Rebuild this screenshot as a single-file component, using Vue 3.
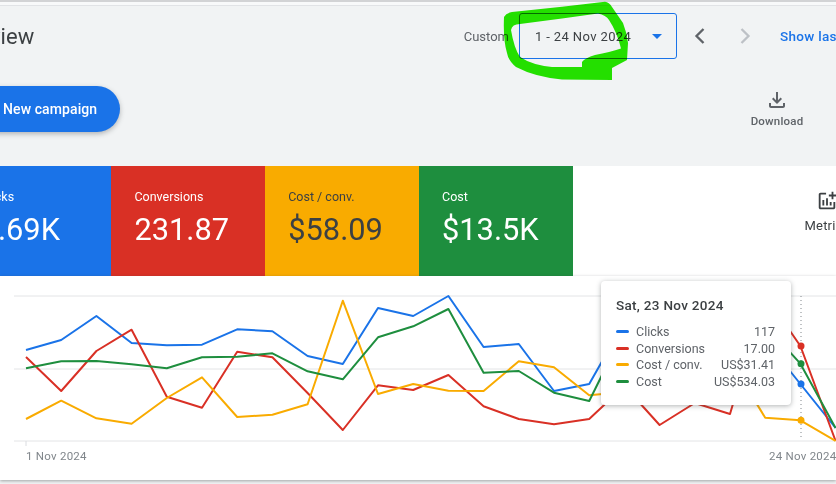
<script setup>
const gridLines = [296, 369, 441];

const stepX = 35.2;
const toPoints = (values) =>
  values.map((y, i) => `${(26 + i * stepX).toFixed(1)},${y}`).join(' ');

const series = [
  {
    name: 'Clicks',
    color: '#1a73e8',
    value: '117',
    marker: 384,
    points: toPoints([350, 340, 316, 343, 345.3, 344.7, 329.3, 331.3, 356, 364, 308, 316, 296, 347, 344, 391, 384, 322, 330, 340, 335, 340, 384, 428]),
  },
  {
    name: 'Conversions',
    color: '#d93025',
    value: '17.00',
    marker: 346,
    points: toPoints([357, 391, 351, 329.7, 396.7, 407.7, 351.7, 357.3, 393, 430, 385.3, 390, 375, 406.3, 419, 424.3, 419, 386, 425, 403, 414, 295, 346, 441]),
  },
  {
    name: 'Cost / conv.',
    color: '#f9ab00',
    value: 'US$31.41',
    marker: 420.3,
    points: toPoints([419, 400.7, 418.3, 423.7, 398, 377.3, 417, 414.7, 404.3, 300.7, 394, 384, 390.7, 391, 361.3, 367.3, 395.3, 392, 370, 360, 360, 417.7, 420.3, 441]),
  },
  {
    name: 'Cost',
    color: '#1e8e3e',
    value: 'US$534.03',
    marker: 363.7,
    points: toPoints([368.3, 361.3, 361, 364.3, 368.3, 357.3, 356.7, 353.3, 371.3, 379.3, 337.3, 326.3, 309, 372.7, 371, 392.7, 401, 330, 335, 345, 340, 325, 363.7, 428]),
  },
];

const tiles = [
  { label: 'Clicks', value: '2.69K', tone: 'blue' },
  { label: 'Conversions', value: '231.87', tone: 'red' },
  { label: 'Cost / conv.', value: '$58.09', tone: 'amber' },
  { label: 'Cost', value: '$13.5K', tone: 'green' },
];
</script>

<template>
  <div class="page">
    <div class="top-rule"></div>

    <header class="head-row">
      <h1 class="title">Overview</h1>
      <div class="date-controls">
        <span class="custom">Custom</span>
        <div class="date-box">
          <span>1 - 24 Nov 2024</span>
          <span class="caret"></span>
        </div>
        <button class="nav-btn">
          <svg width="28" height="28" viewBox="0 0 24 24" fill="none" stroke="#5f6368" stroke-width="2"><polyline points="15 6 9 12 15 18" /></svg>
        </button>
        <button class="nav-btn">
          <svg width="28" height="28" viewBox="0 0 24 24" fill="none" stroke="#bdc1c6" stroke-width="2"><polyline points="9 6 15 12 9 18" /></svg>
        </button>
        <a class="show-last">Show last 30 days</a>
      </div>
    </header>

    <div class="action-row">
      <button class="new-campaign">New campaign</button>
      <div class="download">
        <svg width="24" height="24" viewBox="0 0 24 24" fill="#5f6368"><path d="M18 15v3H6v-3H4v3c0 1.1.9 2 2 2h12c1.1 0 2-.9 2-2v-3h-2zm-1-4-1.41-1.41L13 12.17V4h-2v8.17L8.41 9.59 7 11l5 5 5-5z" /></svg>
        <span>Download</span>
      </div>
    </div>

    <section class="cards">
      <div v-for="tile in tiles" :key="tile.label" class="tile" :class="tile.tone">
        <div class="tile-label">{{ tile.label }}</div>
        <div class="tile-value">{{ tile.value }}</div>
      </div>
      <div class="metrics">
        <svg width="22" height="22" viewBox="0 0 24 24" fill="#3c4043"><path d="M22 5v2h-3v3h-2V7h-3V5h3V2h2v3h3zm-3 14H5V5h6V3H5c-1.1 0-2 .9-2 2v14c0 1.1.9 2 2 2h14c1.1 0 2-.9 2-2v-6h-2v6zm-4-6v4h2v-4h-2zm-4 4h2V9h-2v8zm-2 0v-6H7v6h2z" /></svg>
        <span>Metrics</span>
      </div>
    </section>

    <section class="chart">
      <svg class="plot" width="836" height="204" viewBox="0 276 836 204">
        <line v-for="y in gridLines" :key="y" x1="14" x2="836" :y1="y" :y2="y" stroke="#e3e4e6" stroke-width="1" />
        <line x1="26" x2="26" y1="441" y2="446" stroke="#dadce0" />
        <line x1="801" x2="801" y1="296" y2="440" stroke="#80868b" stroke-dasharray="1 3" />
        <polyline
          v-for="s in series"
          :key="s.name"
          :points="s.points"
          fill="none"
          :stroke="s.color"
          stroke-width="2"
          stroke-linejoin="round"
        />
        <circle v-for="s in series" :key="s.name + '-dot'" cx="801" :cy="s.marker" r="3.5" :fill="s.color" />
        <text x="26" y="460" class="axis-label">1 Nov 2024</text>
        <text x="769" y="460" class="axis-label">24 Nov 2024</text>
      </svg>

      <div class="tooltip">
        <div class="tooltip-title">Sat, 23 Nov 2024</div>
        <div class="tooltip-rows">
          <template v-for="s in series" :key="s.name">
            <span class="swatch" :style="{ background: s.color }"></span>
            <span class="row-name">{{ s.name }}</span>
            <span class="row-value">{{ s.value }}</span>
          </template>
        </div>
      </div>
    </section>

    <!-- hand drawn highlight round the date range -->
    <svg class="scribble" width="836" height="90" viewBox="0 0 836 90">
      <path
        fill="#26ea00"
        fill-rule="evenodd"
        d="M504 17 Q506 13 512 12 L562 6.7 L605 1.7 Q609 2 612 7 L623 23 Q627 33 628 43 L627 60 L612 68 L612 80 L562 79.5 Q535 77 516 67 Q508 60 507 53 Q503 40 504 17 Z
           M511 30 Q512 24 520 24 L562 18.5 L598 13.5 Q606 15 609 20 Q617 32 621 48.5 Q610 52 595 55 Q585 58 582 62 L582 67 L552 67 Q532 65 520 57 Q514 48 511 30 Z"
      />
    </svg>
  </div>
</template>

<style scoped>
.page {
  position: relative;
  width: 836px;
  height: 484px;
  overflow: hidden;
  background: #f1f3f4;
  font-family: Roboto, "Liberation Sans", sans-serif;
  color: #3c4043;
}

.top-rule {
  height: 3px;
  border-top: 2px solid #d2d3d5;
  border-bottom: 1px solid #e1e3e6;
  background: #f8f9fa;
}

.head-row {
  display: flex;
  align-items: center;
  height: 60px;
}

.title {
  margin: 0 0 0 -55px;
  font-size: 22px;
  font-weight: 400;
  color: #3c4043;
  flex-shrink: 0;
}

.date-controls {
  display: flex;
  align-items: center;
  margin-left: auto;
  flex-shrink: 0;
}

.custom {
  font-size: 13px;
  color: #5f6368;
  margin-right: 10px;
}

.date-box {
  display: flex;
  align-items: center;
  justify-content: space-between;
  box-sizing: border-box;
  width: 158px;
  height: 46px;
  padding: 0 14px 0 15px;
  border: 1px solid #1a73e8;
  border-radius: 3px;
  font-size: 13px;
  letter-spacing: 0.38px;
  color: #3c4043;
}

.caret {
  width: 0;
  height: 0;
  border-left: 5px solid transparent;
  border-right: 5px solid transparent;
  border-top: 5px solid #1a73e8;
}

.nav-btn {
  display: flex;
  align-items: center;
  justify-content: center;
  width: 45px;
  height: 40px;
  padding: 0;
  border: none;
  background: none;
}

.show-last {
  width: 56px;
  margin-left: 13px;
  font-size: 13.5px;
  font-weight: 500;
  color: #1a73e8;
  white-space: nowrap;
  letter-spacing: 0.3px;
}

.action-row {
  display: flex;
  justify-content: space-between;
  align-items: flex-start;
  height: 100px;
}

.new-campaign {
  box-sizing: border-box;
  width: 160px;
  height: 46px;
  margin: 20px 0 0 -40px;
  padding: 0 0 0 43px;
  border: none;
  border-radius: 23px;
  background: #1a73e8;
  color: #fff;
  font-family: inherit;
  font-size: 14px;
  font-weight: 500;
  letter-spacing: 0.1px;
  text-align: left;
  white-space: nowrap;
  box-shadow: 0 2px 5px rgba(60, 64, 67, 0.35);
}

.download {
  display: flex;
  flex-direction: column;
  align-items: center;
  width: 80px;
  margin: 22px 19px 0 0;
  font-size: 11.5px;
  font-weight: 500;
  color: #5f6368;
  letter-spacing: 0.2px;
}

.download span {
  margin-top: 2px;
  line-height: 14px;
}

.cards {
  display: flex;
  height: 110px;
  margin-left: -42.4px;
  background: #fff;
}

.tile {
  box-sizing: border-box;
  width: 153.8px;
  flex-shrink: 0;
  padding: 23px 0 0 23px;
  color: #fff;
}

.tile.blue { background: #1a73e8; }
.tile.red { background: #d93025; }
.tile.amber { background: #f9ab00; color: #3c4043; }
.tile.green { background: #1e8e3e; }

.tile-label {
  font-size: 12.5px;
  line-height: 16px;
}

.tile-value {
  margin-top: 7px;
  font-size: 30.8px;
  line-height: 36px;
}

.metrics {
  display: flex;
  flex-direction: column;
  align-items: center;
  width: 46px;
  margin: 24px -14px 0 auto;
  font-size: 13px;
  letter-spacing: 0.2px;
  color: #3c4043;
}

.metrics span {
  margin-top: 6px;
}

.chart {
  position: relative;
  height: 204px;
  background: #fff;
  box-shadow: 0 1px 3px rgba(60, 64, 67, 0.45);
}

.plot {
  display: block;
}

.axis-label {
  font-size: 11.5px;
  fill: #80868b;
  letter-spacing: 0.25px;
}

.tooltip {
  position: absolute;
  left: 601px;
  top: 5px;
  box-sizing: border-box;
  width: 190px;
  height: 124px;
  padding: 16px 16px 0 15px;
  background: #fff;
  border-radius: 4px;
  box-shadow: 0 1px 5px rgba(60, 64, 67, 0.4);
}

.tooltip-title {
  font-size: 13.5px;
  font-weight: 500;
  line-height: 16px;
  letter-spacing: 0.3px;
  color: #3c4043;
}

.tooltip-rows {
  display: grid;
  grid-template-columns: 13px 1fr auto;
  column-gap: 7px;
  grid-auto-rows: 16.8px;
  align-items: center;
  margin-top: 10px;
  font-size: 12.5px;
  color: #5f6368;
}

.row-value {
  text-align: right;
}

.swatch {
  height: 3px;
  border-radius: 2px;
}

.scribble {
  position: absolute;
  left: 0;
  top: 0;
  mix-blend-mode: multiply;
  pointer-events: none;
}
</style>
